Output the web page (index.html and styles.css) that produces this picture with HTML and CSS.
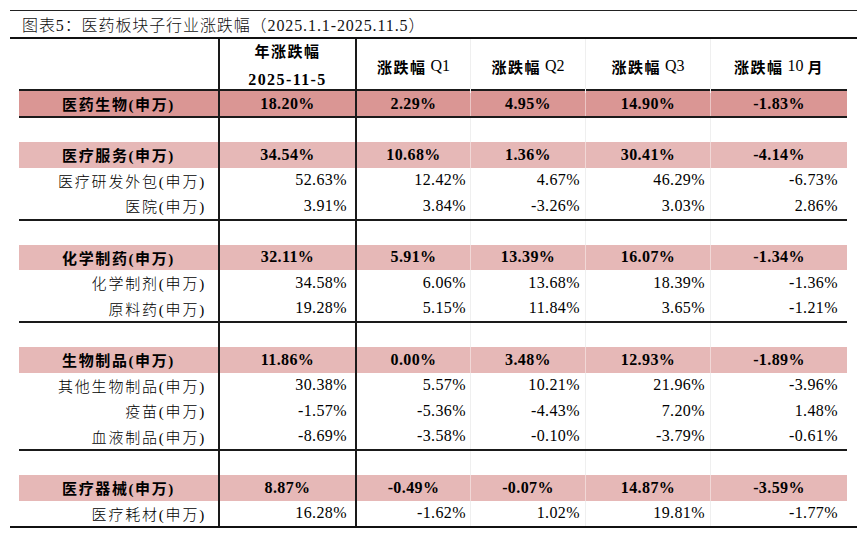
FILE: index.html
```html
<!DOCTYPE html>
<html lang="zh-CN">
<head>
<meta charset="utf-8">
<title>医药板块子行业涨跌幅</title>
<link rel="stylesheet" href="styles.css">
</head>
<body>
<div class="page">
  <div class="title">图表5：医药板块子行业涨跌幅（2025.1.1-2025.11.5）</div>
  <div class="tablewrap">
    <div class="row head">
      <div class="c c0"></div>
      <div class="c c1 stack"><span class="hz">年涨跌幅</span><span class="hd">2025-11-5</span></div>
      <div class="c c2"><span class="hz">涨跌幅</span><span class="q">&nbsp;Q1</span></div>
      <div class="c c3"><span class="hz">涨跌幅</span><span class="q">&nbsp;Q2</span></div>
      <div class="c c4"><span class="hz">涨跌幅</span><span class="q">&nbsp;Q3</span></div>
      <div class="c c5"><span class="hz">涨跌幅</span><span class="q">&nbsp;10&nbsp;</span><span class="hz">月</span></div>
    </div>

    <div class="row cat dark">
      <div class="c c0 lbl">医药生物(申万)</div>
      <div class="c c1 n">18.20%</div>
      <div class="c c2 n">2.29%</div>
      <div class="c c3 n">4.95%</div>
      <div class="c c4 n">14.90%</div>
      <div class="c c5 n">-1.83%</div>
    </div>
    <div class="row blank"><div class="c c0"></div><div class="c c1"></div><div class="c c2"></div><div class="c c3"></div><div class="c c4"></div><div class="c c5"></div></div>

    <div class="row cat">
      <div class="c c0 lbl">医疗服务(申万)</div>
      <div class="c c1 n">34.54%</div>
      <div class="c c2 n">10.68%</div>
      <div class="c c3 n">1.36%</div>
      <div class="c c4 n">30.41%</div>
      <div class="c c5 n">-4.14%</div>
    </div>
    <div class="row sub">
      <div class="c c0 lbl">医疗研发外包(申万)</div>
      <div class="c c1 n">52.63%</div>
      <div class="c c2 n">12.42%</div>
      <div class="c c3 n">4.67%</div>
      <div class="c c4 n">46.29%</div>
      <div class="c c5 n">-6.73%</div>
    </div>
    <div class="row sub end">
      <div class="c c0 lbl">医院(申万)</div>
      <div class="c c1 n">3.91%</div>
      <div class="c c2 n">3.84%</div>
      <div class="c c3 n">-3.26%</div>
      <div class="c c4 n">3.03%</div>
      <div class="c c5 n">2.86%</div>
    </div>
    <div class="row blank"><div class="c c0"></div><div class="c c1"></div><div class="c c2"></div><div class="c c3"></div><div class="c c4"></div><div class="c c5"></div></div>

    <div class="row cat">
      <div class="c c0 lbl">化学制药(申万)</div>
      <div class="c c1 n">32.11%</div>
      <div class="c c2 n">5.91%</div>
      <div class="c c3 n">13.39%</div>
      <div class="c c4 n">16.07%</div>
      <div class="c c5 n">-1.34%</div>
    </div>
    <div class="row sub">
      <div class="c c0 lbl">化学制剂(申万)</div>
      <div class="c c1 n">34.58%</div>
      <div class="c c2 n">6.06%</div>
      <div class="c c3 n">13.68%</div>
      <div class="c c4 n">18.39%</div>
      <div class="c c5 n">-1.36%</div>
    </div>
    <div class="row sub end">
      <div class="c c0 lbl">原料药(申万)</div>
      <div class="c c1 n">19.28%</div>
      <div class="c c2 n">5.15%</div>
      <div class="c c3 n">11.84%</div>
      <div class="c c4 n">3.65%</div>
      <div class="c c5 n">-1.21%</div>
    </div>
    <div class="row blank"><div class="c c0"></div><div class="c c1"></div><div class="c c2"></div><div class="c c3"></div><div class="c c4"></div><div class="c c5"></div></div>

    <div class="row cat">
      <div class="c c0 lbl">生物制品(申万)</div>
      <div class="c c1 n">11.86%</div>
      <div class="c c2 n">0.00%</div>
      <div class="c c3 n">3.48%</div>
      <div class="c c4 n">12.93%</div>
      <div class="c c5 n">-1.89%</div>
    </div>
    <div class="row sub">
      <div class="c c0 lbl">其他生物制品(申万)</div>
      <div class="c c1 n">30.38%</div>
      <div class="c c2 n">5.57%</div>
      <div class="c c3 n">10.21%</div>
      <div class="c c4 n">21.96%</div>
      <div class="c c5 n">-3.96%</div>
    </div>
    <div class="row sub">
      <div class="c c0 lbl">疫苗(申万)</div>
      <div class="c c1 n">-1.57%</div>
      <div class="c c2 n">-5.36%</div>
      <div class="c c3 n">-4.43%</div>
      <div class="c c4 n">7.20%</div>
      <div class="c c5 n">1.48%</div>
    </div>
    <div class="row sub end">
      <div class="c c0 lbl">血液制品(申万)</div>
      <div class="c c1 n">-8.69%</div>
      <div class="c c2 n">-3.58%</div>
      <div class="c c3 n">-0.10%</div>
      <div class="c c4 n">-3.79%</div>
      <div class="c c5 n">-0.61%</div>
    </div>
    <div class="row blank"><div class="c c0"></div><div class="c c1"></div><div class="c c2"></div><div class="c c3"></div><div class="c c4"></div><div class="c c5"></div></div>

    <div class="row cat">
      <div class="c c0 lbl">医疗器械(申万)</div>
      <div class="c c1 n">8.87%</div>
      <div class="c c2 n">-0.49%</div>
      <div class="c c3 n">-0.07%</div>
      <div class="c c4 n">14.87%</div>
      <div class="c c5 n">-3.59%</div>
    </div>
    <div class="row sub">
      <div class="c c0 lbl">医疗耗材(申万)</div>
      <div class="c c1 n">16.28%</div>
      <div class="c c2 n">-1.62%</div>
      <div class="c c3 n">1.02%</div>
      <div class="c c4 n">19.81%</div>
      <div class="c c5 n">-1.77%</div>
    </div>
  </div>
</div>
</body>
</html>
```

FILE: styles.css
```css
* { box-sizing: border-box; }

body {
  margin: 0;
  background: #ffffff;
  color: #000000;
  font-family: "Liberation Serif", "Noto Sans CJK SC", serif;
}

.page {
  margin-left: 10px;
  width: 847px;
  padding-top: 10px;
}

.title {
  height: 29px;
  border-top: 1px solid #222222;
  border-bottom: 2px solid #111111;
  padding-left: 12px;
  display: flex;
  align-items: center;
  font-size: 16px;
  letter-spacing: 0.9px;
  font-weight: 300;
  color: #111111;
}

.tablewrap {
  border-bottom: 2px solid #111111;
  padding: 0 10px 0 9px;
}

.row {
  display: grid;
  grid-template-columns: 201px 137px 113px 115px 125px 137px;
  height: 25.5px;
}

.row.head { height: 50px; }
.row.blank { height: 24px; }
.row.end { height: 27.5px; border-bottom: 2px solid #1a1a1a; }

.row.cat { background: #e6b8b7; }
.row.dark {
  background: #da9694;
  height: 29px;
  border-top: 2px solid #1a1a1a;
  border-bottom: 2px solid #1a1a1a;
}

.c {
  display: flex;
  align-items: center;
  justify-content: center;
  white-space: nowrap;
}

.c0 { border-right: 2px solid #1a1a1a; }
.c1 { border-right: 2px solid #1a1a1a; }
.c3, .c4, .c5 { border-left: 1px solid #efefef; }
.cat .c3, .cat .c4, .cat .c5 { border-left-color: rgba(255, 255, 255, 0.45); }

.head .c { font-size: 15px; }
.hz {
  font-weight: 700;
  letter-spacing: 1.5px;
}
.q { font-size: 16px; }
.stack {
  flex-direction: column;
  line-height: 27px;
}
.hd {
  font-weight: 700;
  font-size: 16px;
  letter-spacing: 1.4px;
}

.lbl {
  font-size: 15px;
  letter-spacing: 1.8px;
  font-weight: 300;
}

.n {
  font-size: 16px;
  letter-spacing: 0.4px;
}

.cat .lbl, .cat .n { font-weight: 700; }
.cat .lbl { letter-spacing: 1.6px; }

.sub .c0 { justify-content: flex-end; padding-right: 12px; }
.sub .n { justify-content: flex-end; }
.sub .c1 { padding-right: 8px; }
.sub .c2 { padding-right: 4px; }
.sub .c3 { padding-right: 5px; }
.sub .c4 { padding-right: 5px; }
.sub .c5 { padding-right: 9px; }
```
